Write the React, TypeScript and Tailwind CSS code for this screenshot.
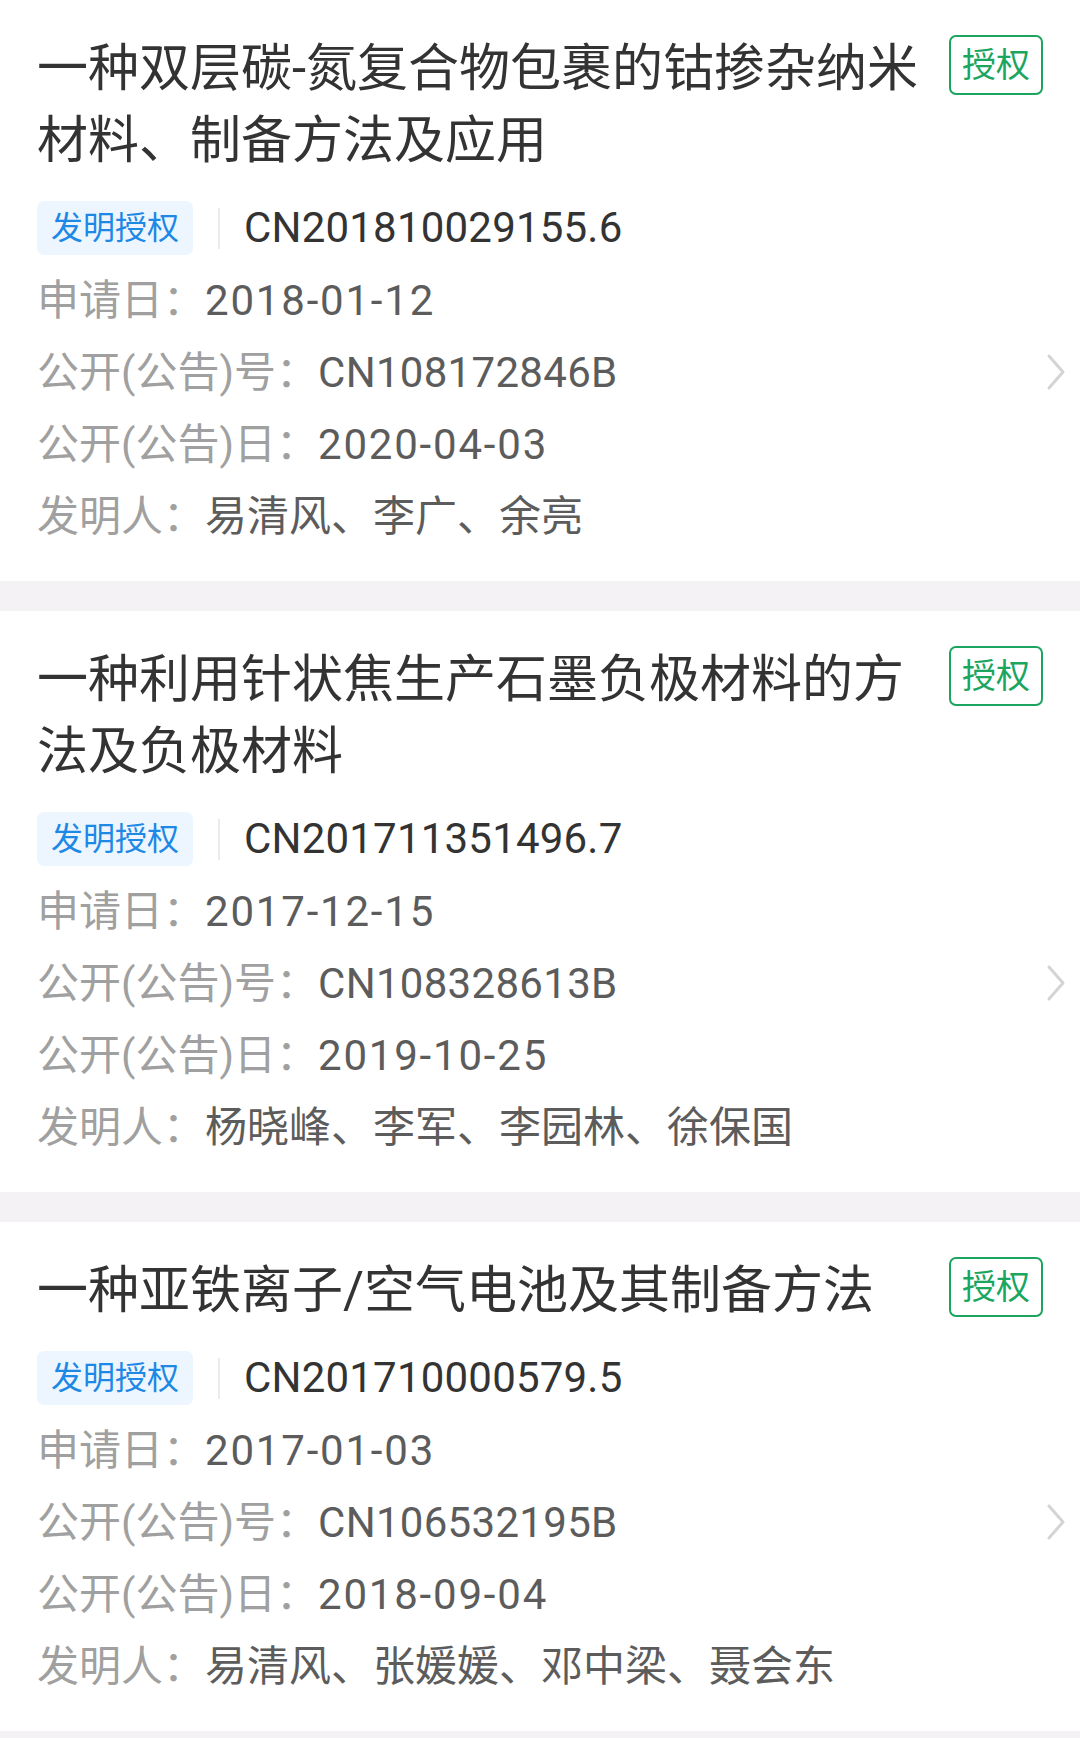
import React from "react";

type Patent = {
  title: string;
  appNo: string;
  appDate: string;
  pubNo: string;
  pubDate: string;
  inventors: string;
};

const patents: Patent[] = [
  {
    title: "一种双层碳-氮复合物包裹的钴掺杂纳米材料、制备方法及应用",
    appNo: "CN201810029155.6",
    appDate: "2018-01-12",
    pubNo: "CN108172846B",
    pubDate: "2020-04-03",
    inventors: "易清风、李广、余亮",
  },
  {
    title: "一种利用针状焦生产石墨负极材料的方法及负极材料",
    appNo: "CN201711351496.7",
    appDate: "2017-12-15",
    pubNo: "CN108328613B",
    pubDate: "2019-10-25",
    inventors: "杨晓峰、李军、李园林、徐保国",
  },
  {
    title: "一种亚铁离子/空气电池及其制备方法",
    appNo: "CN201710000579.5",
    appDate: "2017-01-03",
    pubNo: "CN106532195B",
    pubDate: "2018-09-04",
    inventors: "易清风、张媛媛、邓中梁、聂会东",
  },
];

function Row({
  label,
  value,
  kind,
}: {
  label: string;
  value: string;
  kind: "date" | "num" | "text";
}) {
  const cls =
    kind === "date"
      ? "tracking-[1.8px] text-[#5c5c5c]"
      : kind === "num"
      ? "tracking-[0.3px] text-[#5c5c5c]"
      : "text-[#5c5c5c]";
  return (
    <div className="flex h-[72px] items-center whitespace-nowrap text-[42px] leading-[72px]">
      <span className="text-[#a0a0a0]">{label}</span>
      <span className={cls}>{value}</span>
    </div>
  );
}

function Card({ p }: { p: Patent }) {
  return (
    <div className="bg-white px-[37px] pt-[33px] pb-[28px]">
      <div className="flex items-start">
        <div className="min-w-0 flex-1 text-[51px] leading-[72px] text-[#333333]">
          {p.title}
        </div>
        <div className="ml-[12px] mt-[2px] flex h-[60px] w-[94px] shrink-0 items-center justify-center rounded-[7px] border-2 border-[#1ba55f] text-[34px] leading-none text-[#1ba55f]">
          授权
        </div>
      </div>
      <div className="mt-[14px] flex items-center">
        <div className="flex-1">
          <div className="flex h-[74px] items-center">
            <div className="flex h-[54px] w-[156px] items-center justify-center rounded-[7px] bg-[#edf6ff] text-[32px] leading-none text-[#1e88e5]">
              发明授权
            </div>
            <div className="ml-[25px] h-[41px] w-[2px] bg-[#ebebeb]" />
            <div className="ml-[24px] text-[42px] leading-none tracking-[0.2px] text-[#333333]">
              {p.appNo}
            </div>
          </div>
          <Row label="申请日：" value={p.appDate} kind="date" />
          <Row label="公开(公告)号：" value={p.pubNo} kind="num" />
          <Row label="公开(公告)日：" value={p.pubDate} kind="date" />
          <Row label="发明人：" value={p.inventors} kind="text" />
        </div>
        <svg
          className="-mr-[23px] shrink-0"
          width="20"
          height="38"
          viewBox="0 0 20 38"
          fill="none"
        >
          <path
            d="M3 3 L17 19 L3 35"
            stroke="#d4d4d4"
            strokeWidth="3"
            strokeLinecap="round"
            strokeLinejoin="round"
          />
        </svg>
      </div>
    </div>
  );
}

export default function App() {
  return (
    <div
      className="w-[1080px] bg-white"
      style={{ fontFamily: 'Roboto, "Noto Sans CJK SC", sans-serif' }}
    >
      {patents.map((p, i) => (
        <div key={i}>
          <Card p={p} />
          <div className="h-[30px] bg-[#f5f2f5]" />
        </div>
      ))}
    </div>
  );
}
